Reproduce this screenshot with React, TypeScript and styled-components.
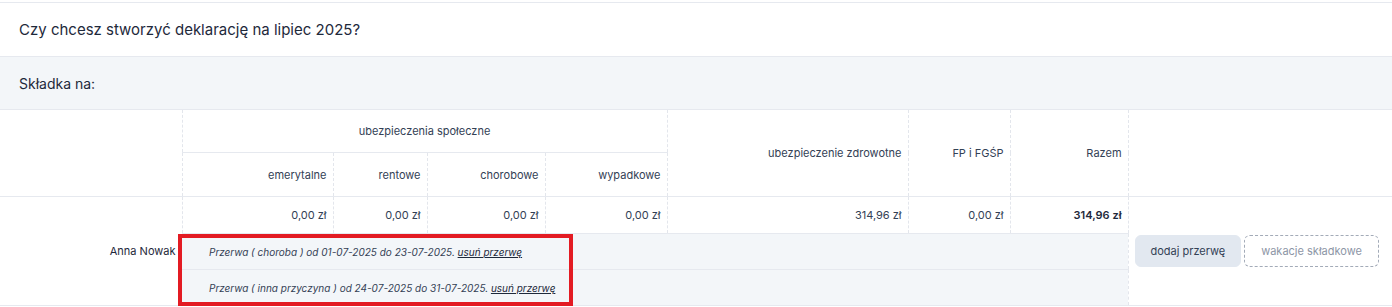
import React from "react";
import styled, { createGlobalStyle } from "styled-components";

const Global = createGlobalStyle`
  html, body { margin: 0; padding: 0; background: #ffffff; }
  body { font-family: Inter, "Noto Sans", sans-serif; color: #1e293b; }
`;

const Page = styled.div`
  width: 1392px;
  padding-top: 2px;
`;

const TitleBar = styled.div`
  border-top: 1px solid #e6e9ef;
  border-bottom: 1px solid #e6e9ef;
  height: 53px;
  display: flex;
  align-items: center;
  padding: 0 19px;
  font-size: 15px;
  color: #1e293b;
`;

const SubBar = styled.div`
  background: #f3f6f9;
  border-bottom: 1px solid #e6e9ef;
  height: 52px;
  display: flex;
  align-items: center;
  padding: 0 19px;
  font-size: 14px;
  font-weight: 400;
  color: #1e293b;
`;

const TableWrap = styled.div`
  position: relative;
`;

const Table = styled.table`
  width: 1392px;
  table-layout: fixed;
  border-collapse: collapse;
  font-size: 11px;
  color: #334155;
`;

const Th = styled.th<{ $align?: string; $h?: number; $bottom?: boolean }>`
  font-weight: 400;
  text-align: ${(p) => p.$align || "right"};
  height: ${(p) => p.$h || 42}px;
  padding: 0 6px 0 6px;
  border-left: 1px dashed #e3e6ec;
  border-right: 1px dashed #e3e6ec;
  border-bottom: ${(p) => (p.$bottom ? "1px solid #e6e9ef" : "none")};
  vertical-align: middle;
  &:first-child { border-left: none; }
`;

const HeadRow = styled.tr<{ $last?: boolean }>`
  border-bottom: ${(p) => (p.$last ? "1px solid #e6e9ef" : "none")};
`;

const Td = styled.td<{ $bold?: boolean }>`
  text-align: right;
  height: 36px;
  padding: 0 6px;
  border-left: 1px dashed #e3e6ec;
  border-right: 1px dashed #e3e6ec;
  font-weight: ${(p) => (p.$bold ? 600 : 400)};
  color: ${(p) => (p.$bold ? "#1e293b" : "#334155")};
  vertical-align: middle;
`;

const NameCell = styled.td`
  text-align: right;
  padding: 0 6px;
  vertical-align: middle;
  color: #1e293b;
  border-bottom: 1px solid #e6e9ef;
`;

const ActionsCell = styled.td`
  vertical-align: middle;
  padding: 0 6px;
  border-left: 1px dashed #e3e6ec;
  border-bottom: 1px solid #e6e9ef;
`;

const BreakCell = styled.td`
  background: #f3f6f9;
  height: 35px;
  padding: 0 0 0 27px;
  border-top: 1px solid #e6e9ef;
  border-bottom: 1px solid #e6e9ef;
  font-size: 10px;
  font-style: italic;
  color: #334155;
  vertical-align: middle;
`;

const RemoveLink = styled.a`
  color: #1e293b;
  text-decoration: underline;
  cursor: pointer;
`;

const Actions = styled.div`
  display: flex;
  gap: 3px;
  align-items: center;
`;

const Button = styled.button<{ $variant: "solid" | "dashed" }>`
  font-family: Inter, "Noto Sans", sans-serif;
  font-size: 11px;
  height: 32px;
  padding: 0 ${(p) => (p.$variant === "solid" ? 15 : 16)}px;
  border-radius: 6px;
  cursor: pointer;
  background: ${(p) => (p.$variant === "solid" ? "#e2e8f0" : "#ffffff")};
  color: ${(p) => (p.$variant === "solid" ? "#334155" : "#8d96a6")};
  border: ${(p) => (p.$variant === "solid" ? "1px solid #e2e8f0" : "1px dashed #a3abb8")};
`;

const Highlight = styled.div`
  position: absolute;
  left: 178px;
  top: 124px;
  width: 395px;
  height: 72px;
  box-sizing: border-box;
  border: 4px solid #e31b23;
  pointer-events: none;
`;

const cols = [182, 151, 94, 118, 122, 241, 102, 118, 264];

const breaks = [
  { reason: "choroba", from: "01-07-2025", to: "23-07-2025" },
  { reason: "inna przyczyna", from: "24-07-2025", to: "31-07-2025" },
];

export default function App() {
  return (
    <Page>
      <Global />
      <TitleBar>Czy chcesz stworzyć deklarację na lipiec 2025?</TitleBar>
      <SubBar>Składka na:</SubBar>
      <TableWrap>
        <Table>
          <colgroup>
            {cols.map((w, i) => (
              <col key={i} style={{ width: w }} />
            ))}
          </colgroup>
          <thead>
            <HeadRow>
              <Th rowSpan={2} />
              <Th colSpan={4} $align="center" $bottom>
                ubezpieczenia społeczne
              </Th>
              <Th rowSpan={2}>ubezpieczenie zdrowotne</Th>
              <Th rowSpan={2}>FP i FGŚP</Th>
              <Th rowSpan={2}>Razem</Th>
              <Th rowSpan={2} />
            </HeadRow>
            <HeadRow $last>
              <Th $h={43}>emerytalne</Th>
              <Th $h={43}>rentowe</Th>
              <Th $h={43}>chorobowe</Th>
              <Th $h={43}>wypadkowe</Th>
            </HeadRow>
          </thead>
          <tbody>
            <tr>
              <NameCell rowSpan={3}>Anna Nowak</NameCell>
              <Td>0,00 zł</Td>
              <Td>0,00 zł</Td>
              <Td>0,00 zł</Td>
              <Td>0,00 zł</Td>
              <Td>314,96 zł</Td>
              <Td>0,00 zł</Td>
              <Td $bold>314,96 zł</Td>
              <ActionsCell rowSpan={3}>
                <Actions>
                  <Button $variant="solid">dodaj przerwę</Button>
                  <Button $variant="dashed">wakacje składkowe</Button>
                </Actions>
              </ActionsCell>
            </tr>
            {breaks.map((b, i) => (
              <tr key={i}>
                <BreakCell colSpan={7}>
                  Przerwa ( {b.reason} ) od {b.from} do {b.to}.{" "}
                  <RemoveLink>usuń przerwę</RemoveLink>
                </BreakCell>
              </tr>
            ))}
          </tbody>
        </Table>
        <Highlight />
      </TableWrap>
    </Page>
  );
}
